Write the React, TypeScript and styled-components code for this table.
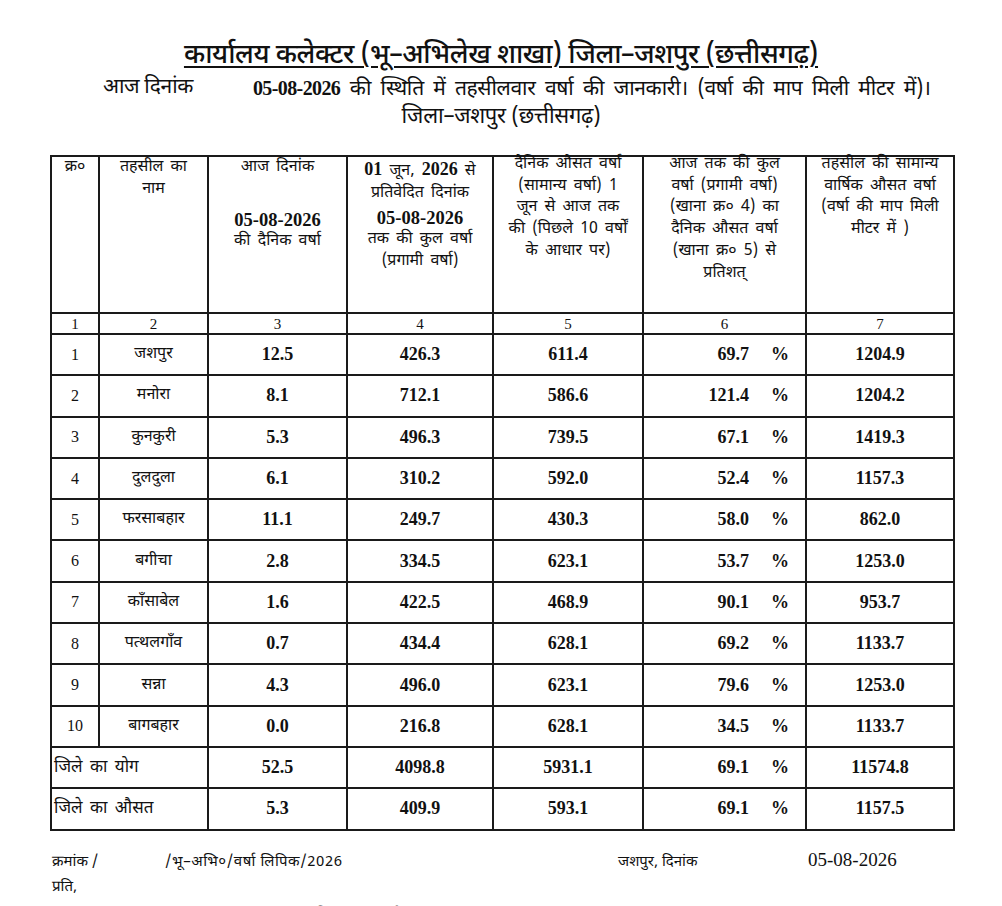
import React from "react";
import styled, { createGlobalStyle } from "styled-components";

const DEVA = `"Noto Sans Devanagari", "Lohit Devanagari", "Mangal", "Noto Sans", "Liberation Sans", sans-serif`;
const SERIF = `"Liberation Serif", "Noto Serif Devanagari", "Noto Sans Devanagari", serif`;

const GlobalStyle = createGlobalStyle`
  html, body {
    margin: 0;
    padding: 0;
    background: #ffffff;
    color: #111111;
  }
  body {
    font-family: ${DEVA};
    width: 1002px;
    height: 906px;
    overflow: hidden;
  }
`;

type Row = {
  no: string;
  name: string;
  today: string;
  total: string;
  avg: string;
  pct: string;
  annual: string;
};

const rows: Row[] = [
  { no: "1", name: "जशपुर", today: "12.5", total: "426.3", avg: "611.4", pct: "69.7", annual: "1204.9" },
  { no: "2", name: "मनोरा", today: "8.1", total: "712.1", avg: "586.6", pct: "121.4", annual: "1204.2" },
  { no: "3", name: "कुनकुरी", today: "5.3", total: "496.3", avg: "739.5", pct: "67.1", annual: "1419.3" },
  { no: "4", name: "दुलदुला", today: "6.1", total: "310.2", avg: "592.0", pct: "52.4", annual: "1157.3" },
  { no: "5", name: "फरसाबहार", today: "11.1", total: "249.7", avg: "430.3", pct: "58.0", annual: "862.0" },
  { no: "6", name: "बगीचा", today: "2.8", total: "334.5", avg: "623.1", pct: "53.7", annual: "1253.0" },
  { no: "7", name: "कॉंसाबेल", today: "1.6", total: "422.5", avg: "468.9", pct: "90.1", annual: "953.7" },
  { no: "8", name: "पत्थलगॉंव", today: "0.7", total: "434.4", avg: "628.1", pct: "69.2", annual: "1133.7" },
  { no: "9", name: "सन्ना", today: "4.3", total: "496.0", avg: "623.1", pct: "79.6", annual: "1253.0" },
  { no: "10", name: "बागबहार", today: "0.0", total: "216.8", avg: "628.1", pct: "34.5", annual: "1133.7" },
];

const summary = [
  { label: "जिले का योग", today: "52.5", total: "4098.8", avg: "5931.1", pct: "69.1", annual: "11574.8" },
  { label: "जिले का औसत", today: "5.3", total: "409.9", avg: "593.1", pct: "69.1", annual: "1157.5" },
];

const colWidths = [48, 109, 139, 146, 150, 163, 148];

const App = () => {
  return (
    <>
      <GlobalStyle />
      <Page>
        <Title>कार्यालय कलेक्टर (भू–अभिलेख शाखा) जिला–जशपुर (छत्तीसगढ़)</Title>
        <SubLine>
          <span>आज दिनांक</span>
          <Statement>
            <b>05-08-2026</b> की स्थिति में तहसीलवार वर्षा की जानकारी। (वर्षा की माप मिली मीटर में)।
          </Statement>
        </SubLine>
        <District>जिला–जशपुर (छत्तीसगढ़)</District>

        <Table>
          <colgroup>
            {colWidths.map((w, i) => (
              <col key={i} style={{ width: w }} />
            ))}
          </colgroup>
          <thead>
            <HeadRow>
              <HeadCell>
                <HeadInner>क्र०</HeadInner>
              </HeadCell>
              <HeadCell>
                <HeadInner>
                  तहसील का
                  <br />
                  नाम
                </HeadInner>
              </HeadCell>
              <HeadCell>
                <HeadInner>
                  आज दिनांक
                  <Spacer />
                  <DateText>05-08-2026</DateText>
                  की दैनिक वर्षा
                </HeadInner>
              </HeadCell>
              <HeadCell>
                <HeadInner>
                  <SerifLine>
                    <b>01</b> जून, <b>2026</b> से
                  </SerifLine>
                  प्रतिवेदित दिनांक
                  <DateText $gap>05-08-2026</DateText>
                  तक की कुल वर्षा
                  <br />
                  (प्रगामी वर्षा)
                </HeadInner>
              </HeadCell>
              <HeadCell>
                <HeadInner $tight>
                  दैनिक औसत वर्षा
                  <br />
                  (सामान्य वर्षा) 1
                  <br />
                  जून से आज तक
                  <br />
                  की (पिछले 10 वर्षों
                  <br />
                  के आधार पर)
                </HeadInner>
              </HeadCell>
              <HeadCell>
                <HeadInner $tight>
                  आज तक की कुल
                  <br />
                  वर्षा (प्रगामी वर्षा)
                  <br />
                  (खाना क्र० 4) का
                  <br />
                  दैनिक औसत वर्षा
                  <br />
                  (खाना क्र० 5) से
                  <br />
                  प्रतिशत्
                </HeadInner>
              </HeadCell>
              <HeadCell>
                <HeadInner $tight>
                  तहसील की सामान्य
                  <br />
                  वार्षिक औसत वर्षा
                  <br />
                  (वर्षा की माप मिली
                  <br />
                  मीटर में )
                </HeadInner>
              </HeadCell>
            </HeadRow>
            <IndexRow>
              {colWidths.map((_, i) => (
                <IndexCell key={i}>{i + 1}</IndexCell>
              ))}
            </IndexRow>
          </thead>
          <tbody>
            {rows.map((r) => (
              <DataRow key={r.no}>
                <NoCell>{r.no}</NoCell>
                <NameCell>{r.name}</NameCell>
                <NumCell>{r.today}</NumCell>
                <NumCell>{r.total}</NumCell>
                <NumCell>{r.avg}</NumCell>
                <PctCell>
                  <span>{r.pct}</span>
                  <PctSign>%</PctSign>
                </PctCell>
                <NumCell>{r.annual}</NumCell>
              </DataRow>
            ))}
            {summary.map((s) => (
              <DataRow key={s.label}>
                <LabelCell colSpan={2}>{s.label}</LabelCell>
                <NumCell>{s.today}</NumCell>
                <NumCell>{s.total}</NumCell>
                <NumCell>{s.avg}</NumCell>
                <PctCell>
                  <span>{s.pct}</span>
                  <PctSign>%</PctSign>
                </PctCell>
                <NumCell>{s.annual}</NumCell>
              </DataRow>
            ))}
          </tbody>
        </Table>

        <Footer>
          <FooterRow>
            <RefNo>क्रमांक /</RefNo>
            <RefPath>/भू–अभि०/वर्षा लिपिक/2026</RefPath>
            <Place>जशपुर, दिनांक</Place>
            <FooterDate>05-08-2026</FooterDate>
          </FooterRow>
          <FooterLine>प्रति,</FooterLine>
          <Recipient>1. आयुक्त, भू–अभिलेख, छत्तीसगढ़ रायपुर की ओर सूचनार्थ सादर प्रेषित।</Recipient>
        </Footer>
      </Page>
    </>
  );
};

export default App;

const Page = styled.div`
  width: 1002px;
  padding-top: 39px;
  box-sizing: border-box;
`;

const Title = styled.h1`
  margin: 0;
  text-align: center;
  font-family: ${DEVA};
  font-size: 27px;
  font-weight: 500;
  line-height: 36px;
  text-decoration: underline;
  text-underline-offset: 3px;
  text-decoration-thickness: 1.5px;
  letter-spacing: -0.4px;
`;

const SubLine = styled.div`
  display: flex;
  gap: 60px;
  padding-left: 103px;
  margin-top: -1px;
  font-family: ${DEVA};
  font-size: 21px;
  line-height: 28px;
  letter-spacing: -0.4px;
  white-space: nowrap;
`;

const Statement = styled.span`
  word-spacing: 4.5px;

  b {
    font-family: ${SERIF};
    font-size: 20px;
    letter-spacing: -0.6px;
  }
`;

const District = styled.div`
  text-align: center;
  font-family: ${DEVA};
  font-size: 22px;
  line-height: 28px;
  letter-spacing: -0.3px;
`;

const Table = styled.table`
  margin: 23px 0 0 50px;
  width: 903px;
  table-layout: fixed;
  border-collapse: collapse;
  border: 2px solid #1a1a1a;

  td,
  th {
    border: 2px solid #1a1a1a;
    padding: 0;
  }
`;

const HeadRow = styled.tr`
  height: 157px;
`;

const HeadCell = styled.th`
  vertical-align: top;
  text-align: center;
  font-weight: 400;
`;

const HeadInner = styled.div<{ $tight?: boolean }>`
  margin-top: ${(p) => (p.$tight ? "-3px" : "0")};
  font-family: ${DEVA};
  font-size: 16px;
  line-height: 21.7px;
  word-spacing: 3px;
  white-space: nowrap;
`;

const Spacer = styled.div`
  height: 30px;
`;

const SerifLine = styled.div`
  margin-top: 2px;
  font-size: 16px;
  b {
    font-family: ${SERIF};
    font-weight: 700;
    font-size: 18px;
  }
`;

const DateText = styled.div<{ $gap?: boolean }>`
  font-family: ${SERIF};
  font-weight: 700;
  font-size: 18.5px;
  line-height: 22px;
  margin-top: ${(p) => (p.$gap ? "3px" : "0")};
`;

const IndexRow = styled.tr`
  height: 21px;
`;

const IndexCell = styled.td`
  text-align: center;
  font-family: ${SERIF};
  font-size: 15px;
  line-height: 16px;
`;

const DataRow = styled.tr`
  height: 41.3px;
`;

const NoCell = styled.td`
  text-align: center;
  font-family: ${SERIF};
  font-size: 16px;
`;

const NameCell = styled.td`
  text-align: center;
  font-family: ${DEVA};
  font-size: 16px;
`;

const LabelCell = styled.td`
  text-align: left;
  font-family: ${DEVA};
  font-size: 17px;
  padding-left: 2px !important;
  word-spacing: 3px;
`;

const NumCell = styled.td`
  text-align: center;
  font-family: ${SERIF};
  font-weight: 700;
  font-size: 18px;
`;

const PctCell = styled.td`
  font-family: ${SERIF};
  font-weight: 700;
  font-size: 18px;
  text-align: right;
  padding-right: 16px !important;
  white-space: nowrap;
`;

const PctSign = styled.span`
  display: inline-block;
  margin-left: 22px;
`;

const Footer = styled.div`
  padding: 17px 0 0 52px;
  font-family: ${DEVA};
`;

const FooterRow = styled.div`
  display: flex;
  align-items: baseline;
  font-size: 15px;
  line-height: 24px;
`;

const RefNo = styled.span`
  width: 113px;
`;

const RefPath = styled.span`
  width: 453px;
  letter-spacing: 0.6px;
`;

const Place = styled.span`
  width: 190px;
`;

const FooterDate = styled.span`
  font-family: ${SERIF};
  font-size: 19px;
`;

const FooterLine = styled.div`
  font-size: 15px;
  line-height: 26px;
`;

const Recipient = styled.div`
  padding-left: 28px;
  margin-top: 4px;
  font-size: 15px;
  line-height: 22px;
`;
